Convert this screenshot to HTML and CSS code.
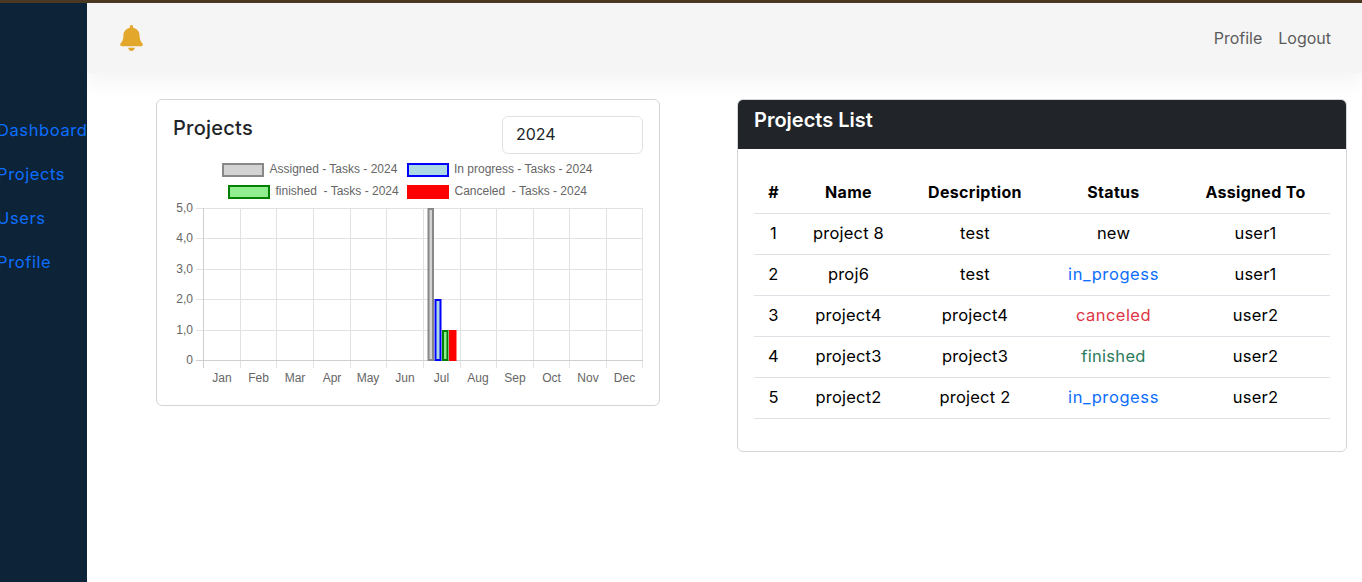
FILE: index.html
```html
<!DOCTYPE html>
<html lang="en">
<head>
<meta charset="utf-8">
<title>Projects</title>
<link rel="stylesheet" href="styles.css">
</head>
<body>
<div class="app">
  <aside class="sidebar">
    <ul class="side-nav">
      <li><a href="#">Dashboard</a></li>
      <li><a href="#">Projects</a></li>
      <li><a href="#">Users</a></li>
      <li><a href="#">Profile</a></li>
    </ul>
  </aside>
  <div class="main">
    <header class="topbar">
      <svg class="bell" viewBox="0 0 448 512" aria-hidden="true"><path d="M224 512c35.32 0 63.97-28.65 63.97-64H160.03c0 35.35 28.65 64 63.97 64zm215.39-149.71c-19.32-20.76-55.47-51.99-55.47-154.29 0-77.7-54.48-139.9-127.94-155.16V32c0-17.67-14.32-32-31.98-32s-31.98 14.33-31.98 32v20.84C118.56 68.1 64.08 130.3 64.08 208c0 102.3-36.15 133.53-55.47 154.29-6 6.45-8.66 14.16-8.61 21.71.11 16.4 12.98 32 32.1 32h383.8c19.12 0 32-15.6 32.1-32 .05-7.55-2.61-15.27-8.61-21.71z"/></svg>
      <nav class="top-links">
        <a href="#">Profile</a>
        <a href="#">Logout</a>
      </nav>
    </header>
    <div class="content">
      <section class="card chart-card">
        <div class="chart-head">
          <h2 class="chart-title">Projects</h2>
          <select class="year"><option>2024</option></select>
        </div>
        <svg class="chart" width="502" height="250" viewBox="157 156 502 250">
          <g class="grid">
            <path d="M240.5 208V368M276.5 208V368M313.5 208V368M350.5 208V368M386.5 208V368M423.5 208V368M460.5 208V368M496.5 208V368M533.5 208V368M569.5 208V368M606.5 208V368M642.5 208V368"/>
            <path d="M196 208.5H643M196 238.5H643M196 269.5H643M196 299.5H643M196 330.5H643"/>
          </g>
          <path class="axis" d="M203.5 208V368M196 360.5H643"/>
          <g class="legend-text">
            <rect class="s-gray" x="223" y="164" width="40" height="12"/>
            <text x="269.500" y="173">Assigned - Tasks - 2024</text>
            <rect class="s-blue" x="408" y="164" width="40" height="12"/>
            <text x="454" y="173">In progress - Tasks - 2024</text>
            <rect class="s-green" x="229" y="186" width="40" height="12"/>
            <text x="275.500" y="195" xml:space="preserve">finished  - Tasks - 2024</text>
            <rect class="s-red" x="408" y="186" width="40" height="12"/>
            <text x="454.500" y="195" xml:space="preserve">Canceled  - Tasks - 2024</text>
          </g>
          <g class="y-labels">
            <text x="193" y="212">5,0</text>
            <text x="193" y="242">4,0</text>
            <text x="193" y="273">3,0</text>
            <text x="193" y="303">2,0</text>
            <text x="193" y="334">1,0</text>
            <text x="193" y="364">0</text>
          </g>
          <g class="x-labels">
            <text x="222" y="382">Jan</text>
            <text x="258.500" y="382">Feb</text>
            <text x="295" y="382">Mar</text>
            <text x="332" y="382">Apr</text>
            <text x="368" y="382">May</text>
            <text x="405" y="382">Jun</text>
            <text x="441.500" y="382">Jul</text>
            <text x="478" y="382">Aug</text>
            <text x="515" y="382">Sep</text>
            <text x="551.500" y="382">Oct</text>
            <text x="588" y="382">Nov</text>
            <text x="624.500" y="382">Dec</text>
          </g>
          <rect class="s-gray" x="428.500" y="209" width="4.500" height="151"/>
          <rect class="s-blue" x="435.500" y="300" width="5" height="60"/>
          <rect class="s-green" x="443" y="331" width="4.500" height="29"/>
          <rect class="s-red" x="450" y="331" width="5.500" height="29"/>
        </svg>
      </section>
      <section class="card list-card">
        <h2 class="list-title">Projects List</h2>
        <div class="list-body">
          <table class="projects">
            <thead>
              <tr><th class="c-num">#</th><th class="c-name">Name</th><th class="c-desc">Description</th><th class="c-status">Status</th><th>Assigned To</th></tr>
            </thead>
            <tbody>
              <tr><td>1</td><td>project 8</td><td>test</td><td>new</td><td>user1</td></tr>
              <tr><td>2</td><td>proj6</td><td>test</td><td class="st-progress">in_progess</td><td>user1</td></tr>
              <tr><td>3</td><td>project4</td><td>project4</td><td class="st-canceled">canceled</td><td>user2</td></tr>
              <tr><td>4</td><td>project3</td><td>project3</td><td class="st-finished">finished</td><td>user2</td></tr>
              <tr><td>5</td><td>project2</td><td>project 2</td><td class="st-progress">in_progess</td><td>user2</td></tr>
            </tbody>
          </table>
        </div>
      </section>
    </div>
  </div>
</div>
</body>
</html>
```
FILE: styles.css
```css
* { box-sizing: border-box; }
html, body { height: 100%; }
body {
  margin: 0;
  background: #fff;
  border-top: 3px solid #4a3823;
  font-family: Inter, "Liberation Sans", sans-serif;
  font-size: 16.500px;
  color: #000;
  overflow: hidden;
}
a { text-decoration: none; }
.app { display: flex; height: 100%; }
.sidebar {
  flex: 0 0 87px;
  background: #0c2338;
  overflow: hidden;
  position: relative;
  z-index: 2;
  padding-top: 105px;
}
.side-nav { list-style: none; margin: 0 0 0 -3px; padding: 0; white-space: nowrap; }
.side-nav li { height: 44px; line-height: 44px; }
.side-nav a { color: #0d6efd; letter-spacing: .6px; }
.main { flex: 1; min-width: 0; }
.topbar {
  height: 70px;
  background: #f5f5f5;
  box-shadow: 0 8px 20px 2px #f5f5f5;
  display: flex;
  align-items: center;
  justify-content: space-between;
  padding: 0 31px 0 33px;
}
.bell { width: 23px; height: 26px; fill: #e2a72b; }
.top-links { display: flex; gap: 16px; font-size: 16px; }
.top-links a { color: #5c5c5c; }
.content { display: flex; align-items: flex-start; padding: 26px 15px 0 69px; gap: 77px; }
.card { background: #fff; border: 1px solid #d3d5d7; border-radius: 6px; }
.chart-card { width: 504px; height: 307px; flex: none; }
.chart-head { display: flex; justify-content: space-between; height: 56px; padding: 16px 16px 0; }
.chart-title { margin: 0; font-size: 20px; font-weight: 500; line-height: 24px; color: #212529; letter-spacing: .25px; }
.year {
  width: 141px;
  height: 38px;
  border: 1px solid #dee2e6;
  border-radius: 6px;
  background: #fff;
  appearance: none;
  -webkit-appearance: none;
  padding: 0 0 2px 13px;
  font: 400 16px Inter, "Liberation Sans", sans-serif;
  color: #212529;
}
.chart { display: block; }
.grid path { fill: none; stroke: #e2e2e2; stroke-width: 1; }
.axis { fill: none; stroke: #cfcfcf; stroke-width: 1; }
.chart text { font-family: "Liberation Sans", Arial, sans-serif; font-size: 12px; font-weight: 400; fill: #666; }
.y-labels text { text-anchor: end; }
.x-labels text { text-anchor: middle; }
.s-gray { fill: #d3d3d3; stroke: #888; stroke-width: 2; }
.s-blue { fill: #add8e6; stroke: #00f; stroke-width: 2; }
.s-green { fill: #90ee90; stroke: #008000; stroke-width: 2; }
.s-red { fill: #f00; stroke: #f00; stroke-width: 2; }
.list-card { flex: 1; height: 353px; overflow: hidden; }
.list-title {
  margin: 0;
  height: 49px;
  background: #212529;
  color: #fff;
  font-size: 20px;
  font-weight: 600;
  line-height: 40px;
  padding-left: 16px;
}
.list-body { padding: 23px 16px 0; }
.projects { width: 100%; border-collapse: collapse; table-layout: fixed; text-align: center; }
.projects th { height: 41px; font-weight: 700; font-size: 16px; letter-spacing: .3px; border-bottom: 1px solid #dee2e6; }
.projects td { height: 41px; padding-bottom: 2px; letter-spacing: .2px; border-bottom: 1px solid #dee2e6; }
.c-num { width: 39px; }
.c-name { width: 111px; }
.c-desc { width: 142px; }
.c-status { width: 135px; }
.projects td.st-progress { color: #0d6efd; letter-spacing: .6px; }
.projects td.st-canceled { color: #dc3545; letter-spacing: .45px; }
.projects td.st-finished { color: #2b7a5c; letter-spacing: .3px; }
```
